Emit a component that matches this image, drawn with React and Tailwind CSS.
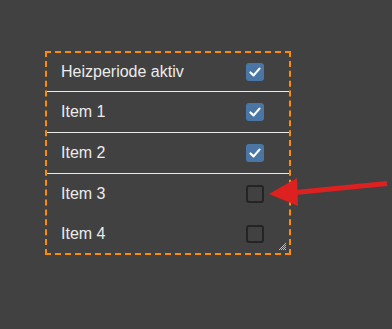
import { useState } from "react";

function Check({ checked }) {
  if (!checked) {
    return <div className="h-[18px] w-[18px] rounded-[3px] border-2 border-[#242424]" />;
  }
  return (
    <div className="flex h-[18px] w-[18px] items-center justify-center rounded-[3px] bg-[#4a76a6]">
      <svg width="18" height="18" viewBox="0 0 18 18">
        <path d="M4.5 9.5 L7.6 12.4 L13.5 5.6" fill="none" stroke="#fff" strokeWidth="2.2" strokeLinecap="round" strokeLinejoin="round" />
      </svg>
    </div>
  );
}

export default function App() {
  const [items] = useState([
    { label: "Heizperiode aktiv", checked: true, h: "h-[39px]", line: true },
    { label: "Item 1", checked: true, h: "h-[41px]", line: true },
    { label: "Item 2", checked: true, h: "h-[41px]", line: true },
    { label: "Item 3", checked: false, h: "h-10", line: false },
    { label: "Item 4", checked: false, h: "h-[39px]", line: false },
  ]);

  return (
    <div className="relative h-screen w-full overflow-hidden bg-[#414141] pl-[45px] pt-[51px] font-['Liberation_Sans',Arial,sans-serif]">
      <div className="relative w-[246px] border-2 border-dashed border-[#ff8c00]">
        {items.map((it) => (
          <div
            key={it.label}
            className={`flex items-center justify-between pl-[14px] pr-[25px] ${it.h} ${it.line ? "border-b border-[#e8e8e8]" : ""}`}
          >
            <span className="text-[16px] text-[#ececec]">{it.label}</span>
            <Check checked={it.checked} />
          </div>
        ))}
        <svg className="absolute bottom-[2px] right-[2px]" width="9" height="9" viewBox="0 0 9 9">
          <path d="M8 1 L1 8 M8 3 L3 8 M8 5 L5 8 M8 7 L7 8" stroke="#bdbdbd" strokeWidth="1" />
        </svg>
      </div>
      <svg className="pointer-events-none absolute left-0 top-0" width="392" height="329" viewBox="0 0 392 329">
        <path d="M295 192.5 L387 183.5" stroke="#dd2020" strokeWidth="5" />
        <path d="M269 194 L297 178 L298 206 Z" fill="#dd2020" />
      </svg>
    </div>
  );
}
